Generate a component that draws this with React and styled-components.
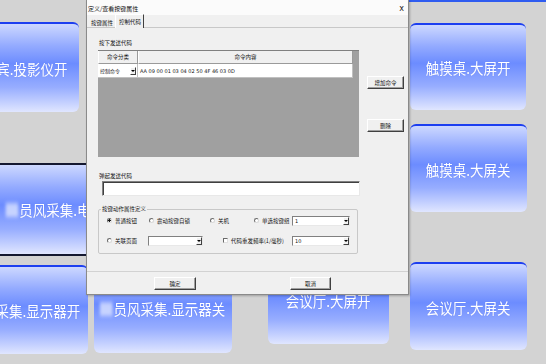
import React from 'react';
import styled, { createGlobalStyle, css } from 'styled-components';

const GlobalStyle = createGlobalStyle`
  html, body {
    margin: 0;
    padding: 0;
    background: #d3d3d3;
    overflow: hidden;
  }
  * { box-sizing: border-box; }
`;

const Canvas = styled.div`
  position: relative;
  width: 546px;
  height: 364px;
  overflow: hidden;
  background: #d3d3d3;
  font-family: "Noto Sans CJK SC", "DejaVu Sans", sans-serif;
`;

const TopStrip = styled.div`
  position: absolute;
  left: 86px;
  right: 0;
  top: 0;
  height: 2px;
  background: #2f5cf0;
`;

const Tile = styled.div`
  position: absolute;
  left: ${p => p.$x}px;
  top: ${p => p.$y}px;
  width: ${p => p.$w}px;
  height: ${p => p.$h}px;
  border-radius: 6px;
  border-top: 2px solid #1d3ff0;
  background: linear-gradient(to bottom, #cdd8ff 0%, #93aaff 25%, #6c8cff 45%, #97adff 72%, #e0e6ff 100%);
  display: flex;
  align-items: center;
  justify-content: center;
  white-space: nowrap;
  ${p => p.$selected && css`
    border-radius: 0;
    border-top: 2px solid #141830;
    border-bottom: 2px solid #141830;
  `}
`;

const TileLabel = styled.span`
  display: inline-flex;
  align-items: center;
  color: #ffffff;
  font-size: 15px;
  transform: scaleX(0.9);
  text-shadow: 0 0 1px rgba(60, 80, 200, 0.3);
`;

const Blur = styled.span`
  display: inline-block;
  width: 14px;
  height: 14px;
  margin-right: 1px;
  background: rgba(225, 232, 255, 0.75);
  filter: blur(2px);
`;

const Dialog = styled.div`
  position: absolute;
  left: 86px;
  top: 0;
  width: 323px;
  height: 295px;
  background: #f0f0f0;
  border-left: 1px solid #8a8a8a;
  border-right: 1px solid #8a8a8a;
  border-bottom: 1px solid #8a8a8a;
  box-shadow: 1px 1px 2px rgba(0, 0, 0, 0.25);
  display: flex;
  flex-direction: column;
  font-family: "Noto Sans CJK SC", "DejaVu Sans", sans-serif;
  font-size: 5.5px;
  color: #111;
`;

const TitleBar = styled.div`
  height: 15px;
  background: #fbfbfb;
  display: flex;
  align-items: center;
  justify-content: space-between;
  padding: 2px 4px 0 1px;
  font-size: 6px;
`;

const Close = styled.span`
  font-family: "DejaVu Sans", sans-serif;
  font-size: 8px;
  color: #222;
`;

const TabStrip = styled.div`
  height: 13px;
  display: flex;
  align-items: flex-end;
  padding-left: 2px;
  background: #f0f0f0;
  border-bottom: 1px solid #c8c8c8;
  position: relative;
  z-index: 1;
`;

const Tab = styled.div`
  height: ${p => (p.$active ? 14 : 11)}px;
  padding: 0 2px;
  display: flex;
  align-items: center;
  margin-bottom: -1px;
  ${p => p.$active && css`
    background: #f0f0f0;
    border-left: 1px solid #ffffff;
    border-top: 1px solid #ffffff;
    border-right: 1px solid #404040;
    padding: 0 2px 0 3px;
  `}
`;

const Panel = styled.div`
  flex: 1;
  padding: 11px 0 0 11px;
  border-bottom: 1px solid #d2d2d2;
`;

const Caption = styled.div`
  height: 8px;
  line-height: 8px;
  margin-top: ${p => p.$mt || 0}px;
  margin-left: 1px;
`;

const CodeRow = styled.div`
  display: flex;
  gap: 8px;
  margin-top: 3px;
`;

const Grid = styled.div`
  width: 261px;
  height: 107px;
  background: #a0a0a0;
  display: grid;
  grid-template-columns: 40px 215px;
  grid-template-rows: 13px 14px;
  align-content: start;
  border-top: 1px solid #808080;
`;

const HeadCell = styled.div`
  background: #f0f0f0;
  border-right: 1px solid #9a9a9a;
  border-bottom: 1px solid #9a9a9a;
  border-left: 1px solid #ffffff;
  display: flex;
  align-items: center;
  justify-content: center;
`;

const Cell = styled.div`
  background: #ffffff;
  border-right: 1px solid #c0c0c0;
  border-bottom: 1px solid #c0c0c0;
  display: flex;
  align-items: center;
  padding-left: 2px;
  gap: 2px;
  justify-content: ${p => (p.$combo ? 'space-between' : 'flex-start')};
  font-family: ${p => (p.$mono ? '"DejaVu Sans", sans-serif' : 'inherit')};
  font-size: 5px;
`;

const Arrow = styled.span`
  width: 6px;
  height: 8px;
  margin-right: 1px;
  background: #f0f0f0;
  border: 1px solid;
  border-color: #ffffff #404040 #404040 #ffffff;
  display: flex;
  align-items: center;
  justify-content: center;
  &::after {
    content: '';
    border-left: 2px solid transparent;
    border-right: 2px solid transparent;
    border-top: 2px solid #000;
  }
`;

const SideButtons = styled.div`
  display: flex;
  flex-direction: column;
  gap: 30px;
  padding-top: 26px;
`;

const Button = styled.div`
  width: ${p => p.$w || 37}px;
  height: 13px;
  background: #f0f0f0;
  border: 1px solid;
  border-color: #ffffff #404040 #404040 #ffffff;
  box-shadow: inset -1px -1px #a0a0a0;
  display: flex;
  align-items: center;
  justify-content: center;
`;

const TextBox = styled.div`
  width: 258px;
  height: 15px;
  margin: 1px 0 0 4px;
  background: #ffffff;
  border: 1px solid;
  border-color: #808080 #e8e8e8 #e8e8e8 #808080;
  box-shadow: inset 1px 1px #404040;
`;

const Group = styled.fieldset`
  width: 260px;
  height: 48px;
  margin: 10px 0 0 0;
  padding: 3px 0 0 8px;
  border: 1px solid #c8c8c8;
  border-radius: 2px;
  display: flex;
  flex-direction: column;
  gap: 9px;
`;

const Legend = styled.legend`
  padding: 0 1px;
  margin-left: -6px;
  font-size: 5.5px;
  line-height: 6px;
`;

const OptionRow = styled.div`
  display: flex;
  align-items: center;
  height: 11px;
`;

const Option = styled.label`
  width: ${p => p.$w}px;
  display: flex;
  align-items: center;
  gap: 3px;
  white-space: nowrap;
`;

const Radio = styled.span`
  width: 5px;
  height: 5px;
  border-radius: 50%;
  border: 1px solid #6a6a6a;
  border-right-color: #d8d8d8;
  border-bottom-color: #d8d8d8;
  background: #ffffff;
  ${p => p.$on && css`
    background: radial-gradient(circle, #111 0 1.2px, #ffffff 1.4px);
  `}
`;

const Check = styled.span`
  width: 5px;
  height: 5px;
  border: 1px solid;
  border-color: #6a6a6a #e0e0e0 #e0e0e0 #6a6a6a;
  background: #ffffff;
`;

const Select = styled.div`
  width: ${p => p.$w}px;
  height: 10px;
  background: #ffffff;
  border: 1px solid;
  border-color: #808080 #e8e8e8 #e8e8e8 #808080;
  display: flex;
  align-items: center;
  justify-content: space-between;
  padding-left: 2px;
  font-family: "DejaVu Sans", sans-serif;
  font-size: 5px;
  & > span:last-child { margin-right: 0; height: 8px; }
`;

const Footer = styled.div`
  height: 22px;
  display: flex;
  gap: 94px;
  padding: 5px 0 0 67px;
`;

const tiles = [
  { x: -28, y: 22, w: 107, h: 90, text: '嘉宾.投影仪开' },
  { x: 410, y: 23, w: 116, h: 87, text: '触摸桌.大屏开' },
  { x: 410, y: 124, w: 117, h: 88, text: '触摸桌.大屏关' },
  { x: 410, y: 262, w: 117, h: 88, text: '会议厅.大屏关' },
  { x: -17, y: 163, w: 130, h: 93, text: '员风采集.电', blur: true, selected: true },
  { x: -53, y: 265, w: 141, h: 89, text: '员风采集.显示器开', blur: true },
  { x: 94, y: 262, w: 138, h: 91, text: '员风采集.显示器关', blur: true },
  { x: 268, y: 255, w: 121, h: 89, text: '会议厅.大屏开' },
];

const App = () => (
  <Canvas>
    <GlobalStyle />
    {tiles.map(t => (
      <Tile key={t.text + t.x} $x={t.x} $y={t.y} $w={t.w} $h={t.h} $selected={t.selected}>
        <TileLabel>
          {t.blur && <Blur />}
          {t.text}
        </TileLabel>
      </Tile>
    ))}
    <TopStrip />

    <Dialog>
      <TitleBar>
        <span>定义/查看按键属性</span>
        <Close>x</Close>
      </TitleBar>
      <TabStrip>
        <Tab>按键属性</Tab>
        <Tab $active>控制代码</Tab>
      </TabStrip>

      <Panel>
        <Caption>按下发送代码</Caption>
        <CodeRow>
          <Grid>
            <HeadCell>命令分类</HeadCell>
            <HeadCell>命令内容</HeadCell>
            <Cell $combo>控制命令<Arrow /></Cell>
            <Cell $mono>AA 09 00 01 03 04 02 50 4F 46 03 0D</Cell>
          </Grid>
          <SideButtons>
            <Button>增加命令</Button>
            <Button>删除</Button>
          </SideButtons>
        </CodeRow>

        <Caption $mt={15}>弹起发送代码</Caption>
        <TextBox />

        <Group>
          <Legend>按键动作属性定义</Legend>
          <OptionRow>
            <Option $w={42}><Radio $on />普通按钮</Option>
            <Option $w={61}><Radio />震动按键自锁</Option>
            <Option $w={44}><Radio />关机</Option>
            <Option $w={38}><Radio />单选按键组</Option>
            <Select $w={58}><span>1</span><Arrow /></Select>
          </OptionRow>
          <OptionRow>
            <Option $w={41}><Radio />关联页面</Option>
            <Option $w={75}><Select $w={55}><span /><Arrow /></Select></Option>
            <Option $w={69}><Check />代码重发频率(1/毫秒)</Option>
            <Select $w={58}><span>10</span><Arrow /></Select>
          </OptionRow>
        </Group>
      </Panel>

      <Footer>
        <Button $w={42}>确定</Button>
        <Button $w={41}>取消</Button>
      </Footer>
    </Dialog>
  </Canvas>
);

export default App;
